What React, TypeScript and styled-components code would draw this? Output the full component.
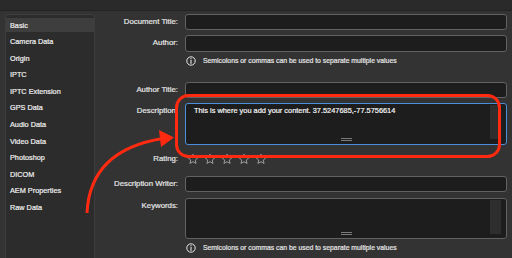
import { FC } from 'react';
import styled, { createGlobalStyle } from 'styled-components';

const GlobalStyle = createGlobalStyle`
  html, body {
    margin: 0;
    padding: 0;
    background: #333333;
    font-family: "Liberation Sans", Arial, sans-serif;
    color: #e6e6e6;
  }
  * { box-sizing: border-box; }
`;

const Page = styled.div`
  position: relative;
  width: 512px;
  height: 258px;
  overflow: hidden;
  background: #333333;
  -webkit-text-stroke: 0.2px currentColor;
`;

const TopBand = styled.div`
  height: 11px;
  background: #2a2a2a;
  border-bottom: 1px solid #232323;
`;

const Main = styled.div`
  display: flex;
  padding-top: 3px;
  height: 247px;
`;

const Sidebar = styled.div`
  width: 90px;
  margin-left: 5px;
  padding-top: 3px;
  background: #2c2c2c;
  border: 1px solid #3d3d3d;
  border-bottom: none;
  border-radius: 3px 3px 0 0;
  display: flex;
  flex-direction: column;
`;

const NavItem = styled.div<{ $active?: boolean }>`
  height: 14px;
  margin-bottom: 2.6px;
  padding-left: 4px;
  display: flex;
  align-items: center;
  font-size: 7.3px;
  color: #f0f0f0;
  background: ${(p) => (p.$active ? '#3e3e3e' : 'transparent')};
`;

const Form = styled.div`
  flex: 1;
  padding-right: 5px;
  display: flex;
  flex-direction: column;
`;

const Row = styled.div<{ $top?: number }>`
  display: grid;
  grid-template-columns: 83px 1fr;
  column-gap: 7px;
  margin-top: ${(p) => p.$top ?? 0}px;
`;

const Label = styled.div<{ $lh?: number }>`
  text-align: right;
  font-size: 7.8px;
  line-height: ${(p) => p.$lh ?? 16}px;
  color: #e6e6e6;
  white-space: nowrap;
`;

const Input = styled.div<{ $h?: number }>`
  height: ${(p) => p.$h ?? 16}px;
  background: #1d1d1d;
  border: 1px solid #626262;
  border-radius: 3px;
`;

const TextBox = styled.div<{ $h: number; $focus?: boolean }>`
  position: relative;
  height: ${(p) => p.$h}px;
  background: #1d1d1d;
  border: ${(p) => (p.$focus ? '1.5px solid #4b8fdc' : '1px solid #626262')};
  border-radius: 3px;
  display: flex;
  justify-content: space-between;
  padding: 2px 5px 0 8px;
`;

const BoxText = styled.div`
  font-size: 7.4px;
  color: #f6f6f6;
  line-height: 10px;
  white-space: nowrap;
`;

const ScrollTrack = styled.div`
  width: 11px;
  height: 34px;
  margin-top: -1px;
  background: #2e2e2e;
`;

const Grip = styled.div`
  position: absolute;
  left: 50%;
  bottom: 3px;
  width: 11px;
  height: 3px;
  margin-left: -5px;
  border-top: 1px solid #7a7a7a;
  border-bottom: 1px solid #7a7a7a;
`;

const Info = styled.div`
  display: flex;
  align-items: center;
  gap: 7px;
  height: 11px;
  padding-left: 1px;
  font-size: 6.85px;
  color: #e6e6e6;
  white-space: nowrap;
`;

const Stars = styled.div`
  display: flex;
  align-items: center;
  gap: 5px;
  height: 14px;
  padding-left: 2px;
`;

const Overlay = styled.svg`
  position: absolute;
  left: 0;
  top: 0;
  pointer-events: none;
`;

const InfoIcon: FC = () => (
  <svg width="10" height="10" viewBox="0 0 10 10">
    <circle cx="5" cy="5" r="4.2" fill="none" stroke="#e6e6e6" strokeWidth="1" />
    <rect x="4.45" y="2.2" width="1.1" height="1.1" fill="#e6e6e6" />
    <rect x="4.45" y="4" width="1.1" height="3.8" fill="#e6e6e6" />
  </svg>
);

const Star: FC = () => (
  <svg width="12" height="12" viewBox="0 0 24 24">
    <path
      d="M12 2.5l2.9 6.3 6.9.7-5.2 4.6 1.5 6.8L12 17.4l-6.1 3.5 1.5-6.8-5.2-4.6 6.9-.7z"
      fill="none"
      stroke="#a8a8a8"
      strokeWidth="1.8"
      strokeLinejoin="round"
    />
  </svg>
);

const navItems = [
  'Basic',
  'Camera Data',
  'Origin',
  'IPTC',
  'IPTC Extension',
  'GPS Data',
  'Audio Data',
  'Video Data',
  'Photoshop',
  'DICOM',
  'AEM Properties',
  'Raw Data',
];

const hint = 'Semicolons or commas can be used to separate multiple values';

export default function App() {
  return (
    <Page>
      <GlobalStyle />
      <TopBand />
      <Main>
        <Sidebar>
          {navItems.map((n, i) => (
            <NavItem key={n} $active={i === 0}>
              {n}
            </NavItem>
          ))}
        </Sidebar>
        <Form>
          <Row>
            <Label>Document Title:</Label>
            <Input />
          </Row>
          <Row $top={5}>
            <Label>Author:</Label>
            <Input $h={17} />
          </Row>
          <Row $top={3}>
            <span />
            <Info>
              <InfoIcon />
              {hint}
            </Info>
          </Row>
          <Row $top={16}>
            <Label>Author Title:</Label>
            <Input />
          </Row>
          <Row $top={5}>
            <Label>Description:</Label>
            <TextBox $h={42} $focus>
              <BoxText>This is where you add your content. 37.5247685,-77.5756614</BoxText>
              <ScrollTrack />
              <Grip />
            </TextBox>
          </Row>
          <Row $top={7}>
            <Label $lh={13}>Rating:</Label>
            <Stars>
              {[0, 1, 2, 3, 4].map((s) => (
                <Star key={s} />
              ))}
            </Stars>
          </Row>
          <Row $top={10}>
            <Label>Description Writer:</Label>
            <Input />
          </Row>
          <Row $top={6}>
            <Label>Keywords:</Label>
            <TextBox $h={41}>
              <BoxText />
              <ScrollTrack />
              <Grip />
            </TextBox>
          </Row>
          <Row $top={3}>
            <span />
            <Info>
              <InfoIcon />
              {hint}
            </Info>
          </Row>
        </Form>
      </Main>
      <Overlay width="512" height="258" viewBox="0 0 512 258">
        <rect x="176.5" y="95.5" width="323" height="61" rx="12" fill="none" stroke="#ff2a10" strokeWidth="3" />
        <path d="M87 213 Q90 150 163 138.5" fill="none" stroke="#ff2a10" strokeWidth="3" />
        <polygon points="159,130 174,137.5 161,147" fill="#ff2a10" />
      </Overlay>
    </Page>
  );
}
